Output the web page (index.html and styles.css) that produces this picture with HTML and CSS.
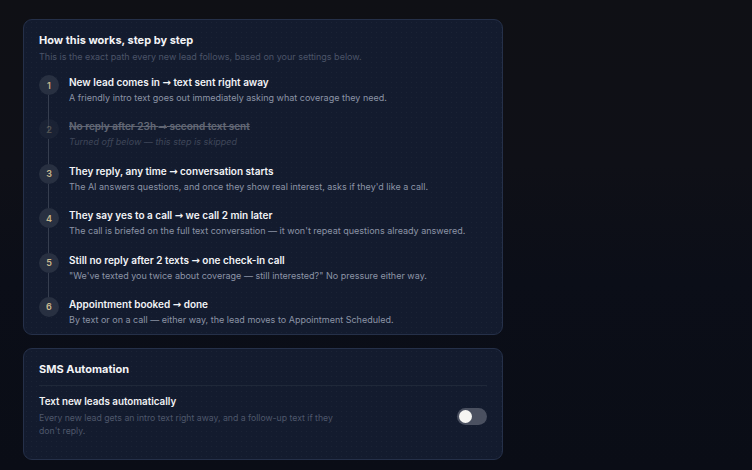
FILE: index.html
```html
<!DOCTYPE html>
<html lang="en">
<head>
<meta charset="utf-8">
<title>SMS Automation</title>
<link rel="stylesheet" href="styles.css">
</head>
<body>
<main class="column">
  <section class="card flow">
    <h2 class="card-title">How this works, step by step</h2>
    <p class="card-sub">This is the exact path every new lead follows, based on your settings below.</p>
    <ol class="steps">
      <li class="step">
        <span class="num">1</span>
        <div class="step-body">
          <div class="step-title">New lead comes in <span class="arrow">→</span> text sent right away</div>
          <div class="step-desc">A friendly intro text goes out immediately asking what coverage they need.</div>
        </div>
      </li>
      <li class="step off">
        <span class="num">2</span>
        <div class="step-body">
          <div class="step-title">No reply after 23h <span class="arrow">→</span> second text sent</div>
          <div class="step-desc">Turned off below — this step is skipped</div>
        </div>
      </li>
      <li class="step">
        <span class="num">3</span>
        <div class="step-body">
          <div class="step-title">They reply, any time <span class="arrow">→</span> conversation starts</div>
          <div class="step-desc">The AI answers questions, and once they show real interest, asks if they'd like a call.</div>
        </div>
      </li>
      <li class="step">
        <span class="num">4</span>
        <div class="step-body">
          <div class="step-title">They say yes to a call <span class="arrow">→</span> we call 2 min later</div>
          <div class="step-desc">The call is briefed on the full text conversation — it won't repeat questions already answered.</div>
        </div>
      </li>
      <li class="step">
        <span class="num">5</span>
        <div class="step-body">
          <div class="step-title">Still no reply after 2 texts <span class="arrow">→</span> one check-in call</div>
          <div class="step-desc">"We've texted you twice about coverage — still interested?" No pressure either way.</div>
        </div>
      </li>
      <li class="step">
        <span class="num">6</span>
        <div class="step-body">
          <div class="step-title">Appointment booked <span class="arrow">→</span> done</div>
          <div class="step-desc">By text or on a call — either way, the lead moves to Appointment Scheduled.</div>
        </div>
      </li>
    </ol>
  </section>

  <section class="card settings">
    <h2 class="card-title small">SMS Automation</h2>
    <div class="setting">
      <div class="setting-text">
        <div class="setting-title">Text new leads automatically</div>
        <div class="setting-desc">Every new lead gets an intro text right away, and a follow-up text if they don't reply.</div>
      </div>
      <span class="toggle" role="switch" aria-checked="false"><span class="knob"></span></span>
    </div>
  </section>
</main>
</body>
</html>
```

FILE: styles.css
```css
* { box-sizing: border-box; }

html, body { height: 100%; }

body {
  margin: 0;
  font-family: Inter, "Noto Sans", "Liberation Sans", sans-serif;
  background: linear-gradient(180deg, #0f1015 0%, #0f1017 35%, #0b0e18 60%, #0a0d16 100%);
  color: #eef0f4;
}

.column {
  width: 480px;
  margin-left: 23px;
  padding-top: 19px;
  display: flex;
  flex-direction: column;
  gap: 13px;
}

.card {
  background-color: #131b2e;
  background-image: radial-gradient(rgba(255,255,255,0.035) 0.6px, transparent 0.9px);
  background-size: 5px 5px;
  border: 1px solid #253049;
  border-radius: 9px;
  padding: 11px 15px 6px;
}

.card-title {
  margin: 0;
  font-size: 11px;
  line-height: 18px;
  font-weight: 700;
  color: #f3f4f7;
}

.card-sub {
  margin: 1px 0 0;
  font-size: 9px;
  line-height: 14px;
  color: #4b5468;
}

.steps {
  list-style: none;
  margin: 10px 0 0;
  padding: 0;
  display: flex;
  flex-direction: column;
  gap: 12.4px;
}

.step {
  position: relative;
  display: flex;
  gap: 10px;
}

/* connector line running down to the next step */
.step:not(:last-child)::before {
  content: "";
  position: absolute;
  left: 9px;
  top: 21px;
  height: 36px;
  width: 1px;
  background: #363e4f;
}

.num {
  flex: none;
  width: 20px;
  height: 20px;
  margin-top: 1px;
  border-radius: 50%;
  background: #283041;
  color: #c8b98e;
  font-size: 9px;
  font-weight: 600;
  display: flex;
  align-items: center;
  justify-content: center;
  position: relative;
}

.step-title {
  font-size: 10px;
  line-height: 16px;
  font-weight: 600;
  color: #f2f3f6;
}

.arrow {
  font-family: "DejaVu Sans", sans-serif;
  font-weight: 700;
  line-height: 0;
}

.step-desc {
  font-size: 9px;
  line-height: 16px;
  color: #8c94a6;
}

.step.off .num,
.step.off .step-body { opacity: 0.35; }

.step.off .step-title { text-decoration: line-through; }
.step.off .step-desc { font-style: italic; }

.settings {
  padding: 12px 15px 20px;
}

.card-title.small {
  font-size: 11px;
  line-height: 16px;
  padding-bottom: 8px;
  border-bottom: 1px solid #1f2839;
}

.setting {
  margin-top: 8px;
  display: flex;
  align-items: center;
  justify-content: space-between;
}

.setting-title {
  font-size: 9.8px;
  line-height: 16px;
  font-weight: 600;
  color: #f0f1f4;
}

.setting-desc {
  max-width: 300px;
  margin-top: 2px;
  font-size: 8.7px;
  line-height: 13.5px;
  color: #4e576b;
}

.toggle {
  flex: none;
  width: 30px;
  height: 17px;
  border-radius: 9px;
  background: #4a5060;
  display: flex;
  align-items: center;
  padding: 0 2px;
}

.knob {
  width: 13px;
  height: 13px;
  border-radius: 50%;
  background: #f5f5f2;
}
```
